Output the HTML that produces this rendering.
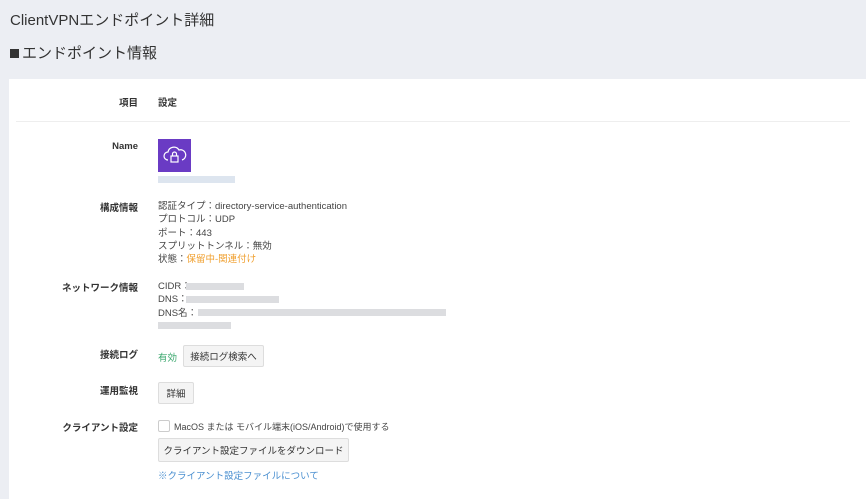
<!DOCTYPE html>
<html><head><meta charset="utf-8"><style>
*{margin:0;padding:0;box-sizing:border-box}
body{width:866px;height:487px;background:#eceef3;font-family:"Liberation Sans","Noto Sans CJK JP",sans-serif;color:#333;position:relative;overflow:hidden}
.a{position:absolute;white-space:nowrap}
.t{font-size:15px;color:#333}
.card{position:absolute;left:9px;top:79px;width:857px;height:420px;background:#fff}
.lb{position:absolute;right:728px;font-size:9.5px;font-weight:bold;color:#333;white-space:nowrap}
.v{position:absolute;left:158px;font-size:9.5px;color:#444;white-space:nowrap}
.btn{position:absolute;background:#f4f4f4;border:1px solid #ddd;border-radius:2px;font-size:9.5px;color:#333;display:flex;align-items:center;justify-content:center}
.blur{position:absolute;background:#dcdde0;height:7px}
</style></head><body>
<div class="a t" style="left:10px;top:9px">ClientVPNエンドポイント詳細</div>
<div class="a t" style="left:10px;top:42px"><span style="display:inline-block;width:9px;height:9px;background:#333;margin-right:3px"></span>エンドポイント情報</div>
<div class="card"></div>
<div class="lb" style="top:95px">項目</div>
<div class="v" style="top:95px;font-weight:bold;color:#333">設定</div>
<div class="a" style="left:16px;top:121px;width:834px;height:1px;background:#eee"></div>
<div class="lb" style="top:141px">Name</div>
<div class="a" style="left:158px;top:139px;width:33px;height:33px;background:#6a3bc4">
<svg width="33" height="33" viewBox="0 0 33 33"><path d="M10 21 a4 4 0 0 1 0-8 a6 6 0 0 1 11-2 a5 5 0 0 1 3 10" fill="none" stroke="#fff" stroke-width="1.2"/><rect x="13" y="17" width="7" height="6" fill="none" stroke="#fff" stroke-width="1.2"/><path d="M14.5 17v-2a2 2 0 0 1 4 0v2" fill="none" stroke="#fff" stroke-width="1.2"/></svg></div>
<div class="blur" style="left:158px;top:176px;width:77px;background:#dde5ef"></div>
<div class="lb" style="top:200px">構成情報</div>
<div class="v" style="top:200px;line-height:13.3px">認証タイプ：directory-service-authentication<br>プロトコル：UDP<br>ポート：443<br>スプリットトンネル：無効<br>状態：<span style="color:#f0a030">保留中-関連付け</span></div>
<div class="lb" style="top:280px">ネットワーク情報</div>
<div class="v" style="top:280px;line-height:13.3px">CIDR：<br>DNS：<br>DNS名：</div>
<div class="blur" style="left:186px;top:283px;width:58px"></div>
<div class="blur" style="left:186px;top:296px;width:93px"></div>
<div class="blur" style="left:198px;top:309px;width:248px"></div>
<div class="blur" style="left:158px;top:322px;width:73px"></div>
<div class="lb" style="top:347px">接続ログ</div>
<div class="v" style="top:350px;color:#3aa76d">有効</div>
<div class="btn" style="left:183px;top:345px;width:81px;height:22px">接続ログ検索へ</div>
<div class="lb" style="top:383px">運用監視</div>
<div class="btn" style="left:158px;top:382px;width:36px;height:22px">詳細</div>
<div class="lb" style="top:420px">クライアント設定</div>
<div class="a" style="left:158px;top:420px;width:12px;height:12px;border:1px solid #ccc;border-radius:2px;background:#fff"></div>
<div class="v" style="left:174px;top:420px;font-size:9px">MacOS または モバイル端末(iOS/Android)で使用する</div>
<div class="btn" style="left:158px;top:438px;width:191px;height:24px">クライアント設定ファイルをダウンロード</div>
<div class="v" style="top:468px;color:#4a8fd0">※クライアント設定ファイルについて</div>
</body></html>
